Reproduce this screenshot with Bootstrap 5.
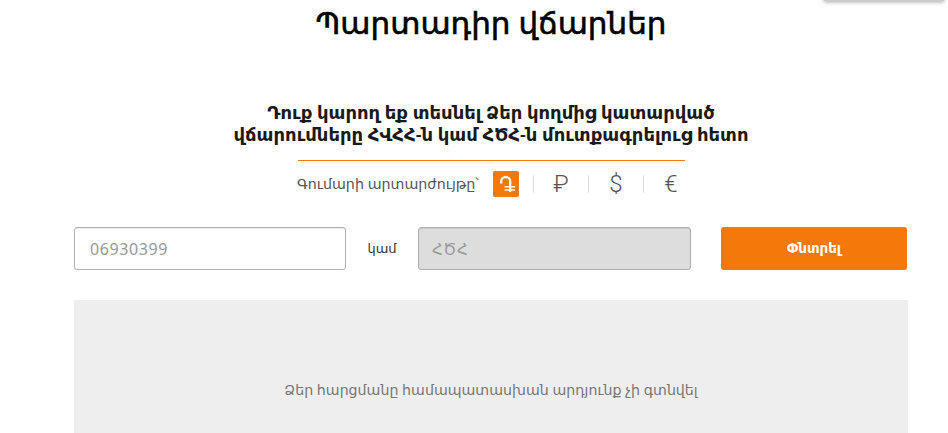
<!DOCTYPE html>
<html lang="hy">
<head>
    <meta charset="UTF-8">
    <meta name="viewport" content="width=device-width, initial-scale=1.0">
    <title>Պարտադիր վճարներ</title>
    <link href="https://cdn.jsdelivr.net/npm/bootstrap@5.3.0/dist/css/bootstrap.min.css" rel="stylesheet">
    <style>
        body { font-family: "Noto Sans", "DejaVu Sans", sans-serif; color: #111; overflow: hidden; background: #fff; }
        .page-wrap { width: 834px; margin-left: 74px; height: 433px; overflow: hidden; }
        .top-shadow { position: absolute; top: -10px; left: 824px; width: 120px; height: 11px; background: #ccc; box-shadow: 0 1px 4px rgba(0,0,0,.35); }
        .page-title { font-size: 31px; font-weight: 400; -webkit-text-stroke: .6px #000; line-height: 44px; margin: 0; color: #000; }
        .lead-text { font-size: 18px; font-weight: 600; line-height: 22px; margin-top: 57px; color: #1a1a1a; }
        .orange-rule { width: 387px; height: 1px; background: #f5780a; margin: 15px auto 0; }
        .currency-row { margin-top: 10px; height: 26px; padding-left: 223px; }
        .currency-label { font-size: 14.250px; color: #555; width: 196px; }
        .cur-item { width: 26px; height: 26px; font-family: "Roboto", "DejaVu Sans", sans-serif; font-weight: 300; font-size: 24px; color: #555; border-radius: 2px; }
        .cur-item.active { background: #f5780a; color: #fff; }
        .cur-sep { width: 1px; height: 18px; background: #ddd; margin: 0 14px; }
        .search-row { margin-top: 30px; height: 43px; }
        .field-input { width: 272px; height: 43px; border: 1px solid #b0b0b0; border-radius: 3px; font-size: 16px; color: #333; padding: 0 15px; letter-spacing: .6px; box-shadow: inset 0 1px 1px rgba(0,0,0,.08); }
        .field-input::placeholder { color: #999; }
        .field-input:disabled { background: #ddd; width: 273px; padding-left: 13px; font-size: 15px; }
        .or-text { width: 72px; font-size: 13px; color: #333; }
        .find-btn { width: 186px; height: 43px; margin-left: 30px; background: #f5780a; border: 0; border-radius: 3px; color: #fff; font-size: 13.500px; font-weight: 700; }
        .empty-panel { margin-top: 30px; height: 180px; background: #eee; padding-top: 79px; font-size: 14.200px; color: #777; }
    </style>
</head>
<body>
<div class="top-shadow"></div>
<div class="page-wrap">
    <h1 class="page-title text-center">Պարտադիր վճարներ</h1>
    <div class="lead-text text-center">Դուք կարող եք տեսնել Ձեր կողմից կատարված<br>վճարումները ՀՎՀՀ-ն կամ ՀԾՀ-ն մուտքագրելուց հետո</div>
    <div class="orange-rule"></div>
    <div class="currency-row d-flex align-items-center">
        <div class="currency-label">Գումարի արտարժույթը՝</div>
        <div class="cur-item active d-flex align-items-center justify-content-center">
            <svg width="26" height="26" viewBox="0 0 26 26" fill="none" stroke="#fff"><path d="M8.200 12.500V10.500a4.500 4.500 0 0 1 9 0V21" stroke-width="2.400"/><path d="M11.500 15.800h10.500M11.500 19h10.500" stroke-width="1.500"/></svg>
        </div>
        <div class="cur-sep"></div>
        <div class="cur-item d-flex align-items-center justify-content-center">₽</div>
        <div class="cur-sep"></div>
        <div class="cur-item d-flex align-items-center justify-content-center">$</div>
        <div class="cur-sep"></div>
        <div class="cur-item d-flex align-items-center justify-content-center">€</div>
    </div>
    <div class="search-row d-flex align-items-center">
        <input class="field-input form-control" type="text" placeholder="06930399">
        <div class="or-text text-center">կամ</div>
        <input class="field-input form-control" type="text" placeholder="ՀԾՀ" disabled>
        <button class="find-btn btn" type="button">Փնտրել</button>
    </div>
    <div class="empty-panel text-center">Ձեր հարցմանը համապատասխան արդյունք չի գտնվել</div>
</div>
</body>
</html>
